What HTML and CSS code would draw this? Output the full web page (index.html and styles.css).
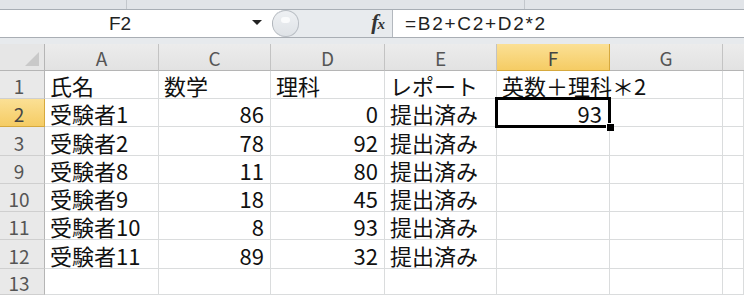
FILE: index.html
```html
<!DOCTYPE html>
<html lang="ja">
<head>
<meta charset="utf-8">
<title>Excel</title>
<link rel="stylesheet" href="styles.css">
</head>
<body>
<div class="app">
  <div class="ribbon-edge">
    <div class="rib-seg rib-a"></div>
    <div class="rib-seg rib-b"></div>
    <div class="rib-seg rib-c"></div>
  </div>
  <div class="formula-bar">
    <div class="name-box">F2</div>
    <div class="name-drop"><svg width="10" height="6" viewBox="0 0 10 6"><polygon points="0,0 10,0 5,5" fill="#222"/></svg></div>
    <div class="fx-panel">
      <div class="grip"><span class="grip-hl"></span></div>
      <span class="fx">f<span class="fx-x">x</span></span>
    </div>
    <div class="formula-input">=B2+C2+D2*2</div>
  </div>
  <div class="band"></div>
  <div class="sheet">
    <div class="hd corner"><svg width="14" height="14" viewBox="0 0 14 14"><polygon points="14,0 14,14 0,14" fill="#c9c9c9"/></svg></div>
    <div class="hd col">A</div>
    <div class="hd col">C</div>
    <div class="hd col">D</div>
    <div class="hd col">E</div>
    <div class="hd col sel">F</div>
    <div class="hd col">G</div>
    <div class="hd col last"></div>

    <div class="hd row">1</div>
    <div class="c"><span class="t">氏名</span></div>
    <div class="c"><span class="t">数学</span></div>
    <div class="c"><span class="t">理科</span></div>
    <div class="c"><span class="t">レポート</span></div>
    <div class="c over"><span class="t">英数＋理科＊2</span></div>
    <div class="c"></div>
    <div class="c"></div>

    <div class="hd row sel">2</div>
    <div class="c"><span class="t">受験者1</span></div>
    <div class="c n"><span class="t">86</span></div>
    <div class="c n"><span class="t">0</span></div>
    <div class="c"><span class="t">提出済み</span></div>
    <div class="c n active"><span class="t">93</span><span class="sel-box"></span><span class="handle"></span></div>
    <div class="c"></div>
    <div class="c"></div>

    <div class="hd row">3</div>
    <div class="c"><span class="t">受験者2</span></div>
    <div class="c n"><span class="t">78</span></div>
    <div class="c n"><span class="t">92</span></div>
    <div class="c"><span class="t">提出済み</span></div>
    <div class="c"></div>
    <div class="c"></div>
    <div class="c"></div>

    <div class="hd row">9</div>
    <div class="c"><span class="t">受験者8</span></div>
    <div class="c n"><span class="t">11</span></div>
    <div class="c n"><span class="t">80</span></div>
    <div class="c"><span class="t">提出済み</span></div>
    <div class="c"></div>
    <div class="c"></div>
    <div class="c"></div>

    <div class="hd row">10</div>
    <div class="c"><span class="t">受験者9</span></div>
    <div class="c n"><span class="t">18</span></div>
    <div class="c n"><span class="t">45</span></div>
    <div class="c"><span class="t">提出済み</span></div>
    <div class="c"></div>
    <div class="c"></div>
    <div class="c"></div>

    <div class="hd row">11</div>
    <div class="c"><span class="t">受験者10</span></div>
    <div class="c n"><span class="t">8</span></div>
    <div class="c n"><span class="t">93</span></div>
    <div class="c"><span class="t">提出済み</span></div>
    <div class="c"></div>
    <div class="c"></div>
    <div class="c"></div>

    <div class="hd row">12</div>
    <div class="c"><span class="t">受験者11</span></div>
    <div class="c n"><span class="t">89</span></div>
    <div class="c n"><span class="t">32</span></div>
    <div class="c"><span class="t">提出済み</span></div>
    <div class="c"></div>
    <div class="c"></div>
    <div class="c"></div>

    <div class="hd row">13</div>
    <div class="c"></div>
    <div class="c"></div>
    <div class="c"></div>
    <div class="c"></div>
    <div class="c"></div>
    <div class="c"></div>
    <div class="c"></div>
  </div>
</div>
</body>
</html>
```

FILE: styles.css
```css
* { box-sizing: border-box; }
html, body { margin: 0; padding: 0; background: #ffffff; }
body { width: 744px; height: 295px; overflow: hidden; font-family: "Noto Sans CJK JP", "Liberation Sans", sans-serif; }

.app { display: flex; flex-direction: column; width: 744px; height: 295px; }

.ribbon-edge { height: 11px; display: flex; background: #e1e4e8; border-bottom: 1px solid #a8aeb5; }
.rib-seg { height: 100%; }
.rib-a { width: 127px; border-right: 1px solid #c3c7cc; }
.rib-b { width: 398px; border-right: 1px solid #c3c7cc; }
.rib-c { flex: 1; }

.formula-bar { height: 29px; display: flex; background: #ffffff; }
.name-box { width: 240px; display: flex; align-items: center; justify-content: center; font-family: "Liberation Sans", sans-serif; font-size: 19px; color: #222; padding-top: 1px; }
.name-drop { width: 32px; display: flex; align-items: center; justify-content: flex-start; padding-left: 12px; }
.fx-panel { width: 121px; display: flex; align-items: center; justify-content: flex-end; padding-right: 8px; background: #e8ebee; border-left: 1px solid #aeb3b9; border-right: 1px solid #b3b8be; border-radius: 15px 0 0 15px; position: relative; }
.grip { position: absolute; left: 0; top: 0; width: 26px; height: 27px; border-radius: 14px; background: linear-gradient(#eef0f3, #dfe3e7); border: 1px solid #b9bec4; border-left: none; }
.grip-hl { position: absolute; left: 8px; top: 6px; width: 9px; height: 6px; border-radius: 5px; background: #fafbfc; }
.fx { font-family: "Liberation Serif", serif; font-style: italic; font-weight: bold; font-size: 22px; line-height: 22px; color: #333; letter-spacing: -1px; }
.fx-x { font-size: 15px; }
.formula-input { flex: 1; display: flex; align-items: center; padding-left: 12px; font-family: "Liberation Sans", sans-serif; font-size: 19px; letter-spacing: 1.7px; color: #222; padding-top: 1px; }

.band { height: 8px; background: #e7eaed; border-top: 1px solid #a9aeb4; }

.sheet {
  flex: 1;
  display: grid;
  grid-template-columns: 45px 114px 112px 114px 112px 113px 113px 21px;
  grid-template-rows: 27px 28px 28px 29px 28px 28px 28px 29px 1fr;
  background: #ffffff;
}

.hd { background: #e6e6e6; color: #555; font-size: 19px; line-height: 22px; display: flex; align-items: center; justify-content: center; }
.col { border-right: 1px solid #c3c3c3; border-bottom: 1px solid #b5b5b5; background: linear-gradient(#ececec, #e2e2e2); padding-top: 2px; }
.col.last { border-right: none; }
.corner { border-right: 1px solid #b5b5b5; border-bottom: 1px solid #b5b5b5; background: #e6e6e6; justify-content: flex-end; align-items: flex-end; padding: 0 5px 4px 0; }
.row { border-right: 1px solid #b5b5b5; border-bottom: 1px solid #cfcfcf; background: #e9e9e9; padding-right: 6px; padding-top: 3px; }
.hd.sel { background: linear-gradient(#fbe095, #f5cc64); color: #444; border-right-color: #d6a93e; border-bottom-color: #d6a93e; }

.c { border-right: 1px solid #dadcdd; border-bottom: 1px solid #dadcdd; font-size: 22px; color: #111; display: flex; align-items: flex-end; padding: 0 4px 2px 5px; white-space: nowrap; position: relative; }
.t { display: block; line-height: 22px; height: 22px; }
.c.n { justify-content: flex-end; padding-right: 6px; }
.c.over { overflow: visible; border-right: none; z-index: 1; }
.c.active { z-index: 2; padding-right: 7px; }
.sel-box { position: absolute; left: -2px; top: -2px; right: -2px; bottom: -2px; border: 3px solid #000; pointer-events: none; }
.handle { position: absolute; right: -5px; bottom: -5px; width: 8px; height: 8px; background: #000; border: 1px solid #fff; border-right: none; border-bottom: none; }
```
